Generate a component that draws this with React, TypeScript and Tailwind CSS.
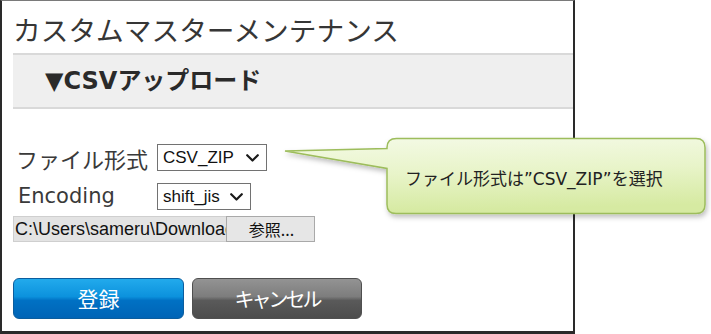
import React from "react";

const JP = "font-['Noto_Sans_CJK_JP',sans-serif]";
const MIX = "font-['DejaVu_Sans','Noto_Sans_CJK_JP',sans-serif]";
const ARIAL = "font-['Liberation_Sans','Noto_Sans_CJK_JP',sans-serif]";

function Chevron() {
  return (
    <svg width="13" height="8" viewBox="0 0 13 8" className="shrink-0">
      <polyline points="1.2,1.2 6.5,6.5 11.8,1.2" fill="none" stroke="#1a1a1a" strokeWidth="2.2" strokeLinecap="round" strokeLinejoin="round" />
    </svg>
  );
}

function FakeSelect({ value, width }: { value: string; width: string }) {
  return (
    <div className={`flex h-[27px] ${width} items-center border border-[#727272] bg-white pl-[5px] pr-[7px] ${ARIAL} text-[17px] leading-none text-[#111]`}>
      <span>{value}</span>
      <span className="ml-auto">
        <Chevron />
      </span>
    </div>
  );
}

export default function App() {
  return (
    <div className="relative h-[334px] w-[711px] overflow-hidden bg-white">
      <div className="flex h-[334px] w-[575px] flex-col border-b-[3px] border-l-2 border-r-2 border-t border-b-[#2a2a2a] border-l-[#2a2a2a] border-r-[#2a2a2a] border-t-[#7a7a7a] pl-[11px]">
        <div className={`mt-[15px] h-[27px] ${JP} text-[27.7px] leading-none text-[#363636]`}>
          カスタムマスターメンテナンス
        </div>
        <div className="mt-[10px] flex h-[56px] items-center border-b-2 border-t-2 border-[#d9d9d9] bg-[#efefef] pl-[32px]">
          <span className={`${MIX} text-[24px] font-bold leading-none text-[#2a2a2a]`}>▼CSVアップロード</span>
        </div>

        <div className="mt-[35px] flex h-[27px] items-center">
          <div className={`w-[144px] pl-[3px] ${JP} text-[22px] leading-none text-[#3a3a3a]`}>ファイル形式</div>
          <FakeSelect value="CSV_ZIP" width="w-[110px]" />
        </div>
        <div className="mt-[12px] flex h-[27px] items-center">
          <div className={`w-[144px] pl-[5px] ${MIX} text-[21px] leading-none text-[#3a3a3a]`}>Encoding</div>
          <FakeSelect value="shift_jis" width="w-[94px]" />
        </div>

        <div className="mt-[6px] flex h-[26px] w-[302px]">
          <div className={`h-full w-[213px] overflow-hidden whitespace-nowrap border border-r-0 border-[#cfcfcf] bg-[#e3e3e3] pl-[1px] ${ARIAL} text-[18px] leading-[24px] text-[#111]`}>
            C:\Users\sameru\Downloads
          </div>
          <div className={`flex h-full w-[89px] items-center justify-center border border-[#a9a9a9] bg-[#e6e6e6] pl-[2px] ${JP} text-[16px] leading-none text-[#111]`}>
            参照...
          </div>
        </div>

        <div className="mt-[36px] flex gap-[8px]">
          <div className={`flex h-[41px] w-[171px] items-center justify-center rounded-[6px] border border-[#0b5d9e] bg-[linear-gradient(to_bottom,#22aaec_0%,#0c92dd_45%,#0071c4_55%,#0064b6_100%)] ${JP} text-[21px] leading-none text-white`}>
            登録
          </div>
          <div className={`flex h-[41px] w-[170px] items-center justify-center rounded-[6px] border border-[#4f4f4f] bg-[linear-gradient(to_bottom,#939393_0%,#7d7d7d_45%,#5a5a5a_55%,#4c4c4c_100%)] ${JP} text-[20px] leading-none tracking-[-3px] text-white`}>
            キャンセル
          </div>
        </div>
      </div>

      <svg className="pointer-events-none absolute left-0 top-0" width="711" height="334" viewBox="0 0 711 334">
        <defs>
          <linearGradient id="cg" x1="0" y1="0" x2="0.15" y2="1">
            <stop offset="0" stopColor="#f4fae6" />
            <stop offset="0.5" stopColor="#e8f4c9" />
            <stop offset="1" stopColor="#d6eaa2" />
          </linearGradient>
          <filter id="sh" x="-10%" y="-20%" width="120%" height="150%">
            <feDropShadow dx="1.5" dy="3" stdDeviation="2.5" floodColor="#000" floodOpacity="0.25" />
          </filter>
        </defs>
        <path
          d="M396.5 138.5 H696 Q705 138.5 705 147.5 V204.5 Q705 213.5 696 213.5 H396 Q387 213.5 387 204.5 V168.5 L285 151 L387 148.5 V147.5 Q387 138.5 396.5 138.5 Z"
          fill="url(#cg)"
          stroke="#9dbd5c"
          strokeWidth="1.5"
          filter="url(#sh)"
        />
      </svg>
      <div className={`absolute left-[387px] top-[139px] flex h-[74px] w-[318px] items-center pl-[18px] pt-[6px] ${MIX} text-[17px] leading-none text-[#222]`}>
        ファイル形式は”CSV_ZIP”を選択
      </div>
    </div>
  );
}
